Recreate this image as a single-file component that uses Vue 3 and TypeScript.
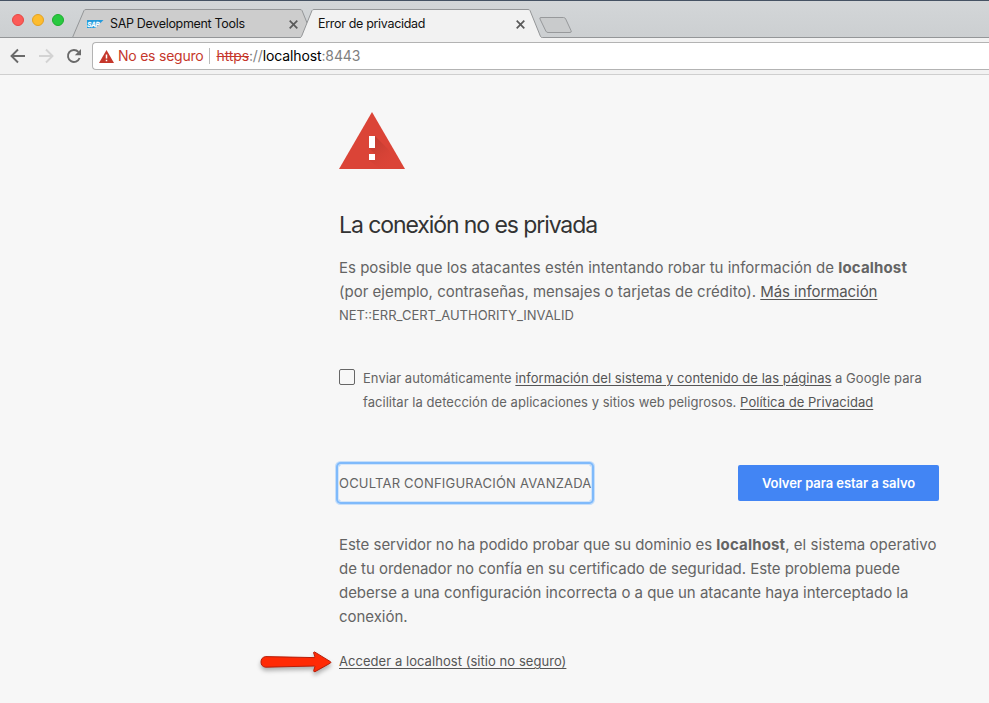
<script setup lang="ts">
interface Tab {
  title: string
  active: boolean
}

const tabs: Tab[] = [
  { title: 'SAP Development Tools', active: false },
  { title: 'Error de privacidad', active: true },
]
const lights: string[] = ['red', 'yellow', 'green']
</script>

<template>
  <div class="window">
    <header class="strip">
      <svg class="shapes" width="989" height="38" viewBox="0 0 989 38">
        <path d="M0 37.5H989" stroke="#949698" fill="none" />
        <path d="M72.5 37.5L84 10.5Q84.500 9.500 86 9.500H300Q301.500 9.500 302 10.500L313 37.500Z" fill="#cdcdcd" stroke="#949698" />
        <path d="M300 38V37.500Q301 37.500 301.500 36.500L312 10.500Q312.500 9.500 314 9.500H528Q529.500 9.500 530 10.500L540.500 36.500Q541 37.500 542.500 37.500V38Z" fill="#f2f2f2" />
        <path d="M300 37.500Q301 37.500 301.500 36.500L312 10.500Q312.500 9.500 314 9.500H528Q529.500 9.500 530 10.500L540.500 36.500Q541 37.500 542.500 37.500" fill="none" stroke="#949698" />
        <path d="M541 17.500H563.500Q565 17.500 565.700 19L571 30.500Q572 32.500 570 32.500H548Q546.500 32.500 545.800 31L540 19Q539.300 17.500 541 17.500Z" fill="#c9cbcc" stroke="#97999b" />
      </svg>
      <div class="lights">
        <span v-for="light in lights" :key="light" class="light" :class="light"></span>
      </div>
      <div v-for="tab in tabs" :key="tab.title" class="tab" :class="{ active: tab.active }">
        <svg v-if="!tab.active" class="sap" width="17" height="8" viewBox="0 0 17 8">
          <path d="M0 0H16.500L8.500 8H0Z" fill="#249bdc" />
          <text x="0.300" y="6.800" textLength="12" lengthAdjust="spacingAndGlyphs">SAP</text>
        </svg>
        <span class="tab-title">{{ tab.title }}</span>
        <svg class="close" width="9" height="9" viewBox="0 0 9 9">
          <path d="M0.700 0.700L8.300 8.300M8.300 0.700L0.700 8.300" stroke="#5a5a5a" stroke-width="1.700" />
        </svg>
      </div>
    </header>

    <nav class="toolbar">
      <svg class="nav-icon" width="16" height="16" viewBox="0 0 16 16">
        <path d="M15 8H2M8 1.500L1.500 8L8 14.500" fill="none" stroke="#6a6a6a" stroke-width="1.900" />
      </svg>
      <svg class="nav-icon" width="16" height="16" viewBox="0 0 16 16">
        <path d="M1 8H14M8 1.500L14.500 8L8 14.500" fill="none" stroke="#d3d3d3" stroke-width="1.900" />
      </svg>
      <svg class="nav-icon" width="16" height="16" viewBox="0 0 16 16">
        <path d="M13.600 10A6 6 0 1 1 12.400 3.900" fill="none" stroke="#6a6a6a" stroke-width="1.900" />
        <path d="M15 1V7.200H8.800Z" fill="#6a6a6a" />
      </svg>
      <div class="omnibox">
        <svg width="15" height="13" viewBox="0 0 15 13">
          <path d="M7.500 0L15 13H0Z" fill="#c5372b" />
          <path d="M7.500 4.500V8.500M7.500 9.700V11.300" stroke="#fff" stroke-width="1.500" />
        </svg>
        <span class="unsafe">No es seguro</span>
        <span class="divider"></span>
        <span class="url"><s>https</s><i>://</i>localhost<i>:8443</i></span>
      </div>
    </nav>

    <main class="page">
      <svg class="warning" width="66" height="57" viewBox="0 0 66 57">
        <defs>
          <linearGradient id="shade" x1="30" y1="24" x2="55" y2="52" gradientUnits="userSpaceOnUse">
            <stop offset="0" stop-color="#b5372c" />
            <stop offset="1" stop-color="#db4437" stop-opacity="0" />
          </linearGradient>
        </defs>
        <path d="M33 0L66 57H0Z" fill="#db4437" />
        <path d="M36 24L49 37L60 57H41L30 48L36 42L30 36Z" fill="url(#shade)" />
        <path d="M30 24H36V36H30ZM30 42H36V48H30Z" fill="#fff" />
      </svg>

      <h1>La conexión no es privada</h1>

      <p class="body">
        <span class="line">Es posible que los atacantes estén intentando robar tu información de <b>localhost</b></span>
        <span class="line">(por ejemplo, contraseñas, mensajes o tarjetas de crédito). <a class="more-info">Más información</a></span>
      </p>
      <div class="code">NET::ERR_CERT_AUTHORITY_INVALID</div>

      <label class="optin">
        <span class="checkbox"></span>
        <span class="optin-text">
          <span class="line">Enviar automáticamente <a>información del sistema y contenido de las páginas</a> a Google para</span>
          <span class="line">facilitar la detección de aplicaciones y sitios web peligrosos. <a>Política de Privacidad</a></span>
        </span>
      </label>

      <div class="actions">
        <button class="details" type="button">OCULTAR CONFIGURACIÓN AVANZADA</button>
        <button class="primary" type="button">Volver para estar a salvo</button>
      </div>

      <p class="body more">
        <span class="line">Este servidor no ha podido probar que su dominio es <b>localhost</b><span class="tail">, el sistema operativo</span></span>
        <span class="line">de tu ordenador no confía en su certificado de seguridad. Este problema puede</span>
        <span class="line">deberse a una configuración incorrecta o a que un atacante haya interceptado la</span>
        <span class="line">conexión.</span>
      </p>

      <div class="proceed">
        <svg class="arrow" width="78" height="32" viewBox="0 0 78 32">
          <path d="M8.500 10.600L57.500 11.600Q58 11 57.300 9L56.500 6.500Q57 5.500 58 6.200L73.500 15.700Q74.200 16.300 73.500 17L58 25.700Q56.500 26 56.700 24.500L57.800 21Q58 20.300 57.500 20L8.500 21.200Q4 20.500 4 16Q4 11.500 8.500 10.600Z" fill="#ff2a05" stroke="#b51d09" />
        </svg>
        <a>Acceder a localhost (sitio no seguro)</a>
      </div>
    </main>
  </div>
</template>

<style>
body {
  background: #f7f7f7;
  overflow: hidden;
}
</style>

<style scoped>
.window {
  width: 989px;
  height: 703px;
  box-sizing: border-box;
  overflow: hidden;
  background: #f7f7f7;
  font-family: Inter, Roboto, sans-serif;
  color: #646464;
}

.strip {
  position: relative;
  display: flex;
  height: 38px;
  box-sizing: border-box;
  background: linear-gradient(#d3d6d8, #cccfd1);
  border-top: 1px solid #455263;
}

.shapes {
  position: absolute;
  left: 0;
  top: -1px;
}

.lights {
  position: relative;
  display: flex;
  gap: 8px;
  padding: 13px 0 0 12px;
  width: 75px;
}

.light {
  width: 12px;
  height: 12px;
  box-sizing: border-box;
  border-radius: 50%;
}

.red {
  background: #fc5b57;
  border: 1px solid #e64844;
}

.yellow {
  background: #fdbc2e;
  border: 1px solid #e2a223;
}

.green {
  background: #28c940;
  border: 1px solid #1dad2e;
}

.tab {
  position: relative;
  display: flex;
  align-items: center;
  width: 210.5px;
  height: 28px;
  padding-top: 9px;
  box-sizing: content-box;
  color: #111;
  font-size: 12.5px;
  letter-spacing: -0.32px;
}

.tab.active {
  width: 207px;
  margin-left: 20.5px;
}

.sap {
  margin-right: 6px;
}

.sap text {
  font: italic 900 7.5px "Liberation Sans", sans-serif;
  fill: #fff;
  stroke: #fff;
  stroke-width: 0.3px;
}

.tab-title {
  margin-bottom: 1px;
}

.close {
  margin-left: auto;
}

.toolbar {
  display: flex;
  align-items: center;
  height: 37px;
  box-sizing: border-box;
  padding-left: 10px;
  background: #f2f2f2;
  border-bottom: 1px solid #cfcfcf;
}

.nav-icon {
  margin-right: 12px;
}

.omnibox {
  display: flex;
  align-items: center;
  flex: 1;
  height: 28px;
  box-sizing: border-box;
  margin-left: -2px;
  padding-left: 6px;
  background: #fff;
  border: 1px solid #b3b3b3;
  border-right: 0;
  border-radius: 4px 0 0 4px;
  font-size: 14px;
  letter-spacing: -0.12px;
  color: #000;
}

.unsafe {
  margin: 0 0 1px 4px;
  letter-spacing: -0.23px;
  color: #c5372b;
}

.divider {
  width: 1px;
  height: 16px;
  margin: 0 6px;
  background: #bbb;
}

.url {
  margin-bottom: 1px;
}

.url s {
  color: #c5372b;
}

.url i {
  font-style: normal;
  color: #808080;
}

.page {
  width: 600px;
  padding: 37px 0 0 339px;
}

.warning {
  display: block;
}

h1 {
  margin: 40px 0 0;
  height: 32px;
  font-size: 23px;
  line-height: 32px;
  font-weight: 400;
  letter-spacing: -1.08px;
  color: #333;
}

.body {
  margin: 15px 0 0;
  font-size: 15px;
  line-height: 24px;
}

.line {
  display: block;
  white-space: nowrap;
}

.body b {
  letter-spacing: 0.16px;
}

a {
  color: #555;
  text-decoration: underline;
  text-underline-offset: 2px;
  text-decoration-thickness: 1px;
}

.more-info {
  letter-spacing: -0.07px;
}

.code {
  height: 24px;
  font-size: 13px;
  line-height: 22px;
}

.optin {
  display: flex;
  margin-top: 38px;
  font-size: 13px;
  line-height: 24px;
  letter-spacing: 0.038px;
}

.checkbox {
  width: 16px;
  height: 16px;
  box-sizing: border-box;
  margin: 3px 8px 0 0;
  border: 1px solid #666;
  border-radius: 2px;
}

.actions {
  display: flex;
  justify-content: space-between;
  margin-top: 51px;
}

button {
  height: 36px;
  padding: 0;
  border: 0;
  border-radius: 2px;
  font-family: inherit;
  font-size: 13px;
  white-space: nowrap;
}

.details {
  width: 252px;
  background: none;
  color: #646464;
  letter-spacing: 0.2px;
  box-shadow: 0 0 0 1px #d3e5f9, 0 0 0 3px #7fbafb, 0 0 0 4px #c5defa;
}

.primary {
  width: 201px;
  background: #4285f4;
  color: #fff;
  font-weight: 600;
  letter-spacing: -0.06px;
}

.more {
  margin-top: 32px;
  letter-spacing: -0.033px;
}

.tail {
  letter-spacing: 0.03px;
}

.proceed {
  position: relative;
  margin-top: 20px;
  font-size: 13px;
  line-height: 24px;
  letter-spacing: 0.05px;
}

.arrow {
  position: absolute;
  left: -82px;
  top: -3px;
  filter: drop-shadow(0 3px 2px rgba(0, 0, 0, 0.3));
}
</style>
